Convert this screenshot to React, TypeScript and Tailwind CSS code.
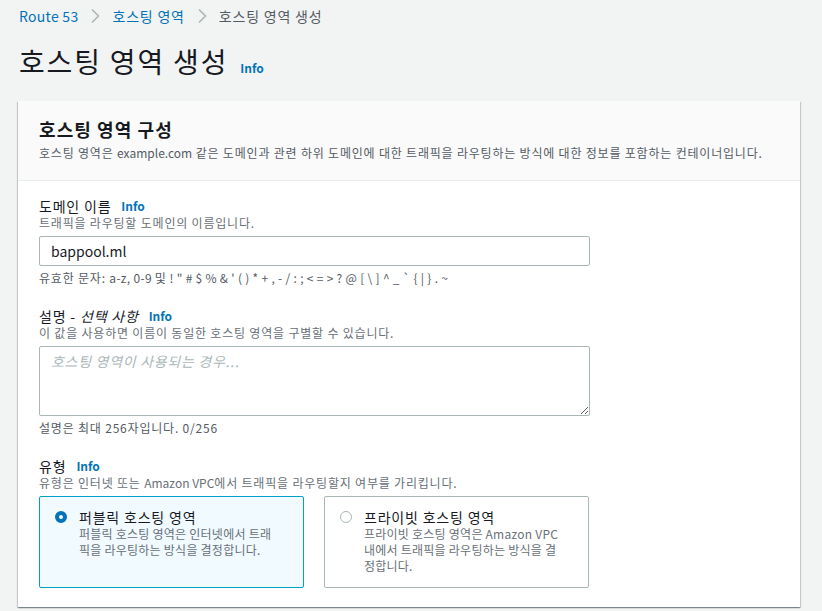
import React from 'react'

const font = { fontFamily: '"Noto Sans CJK KR", "Noto Sans", sans-serif' }

function Info() {
  return <span className="ml-[10px] text-[12px] font-bold tracking-normal text-[#0073bb]">Info</span>
}

function Latin({ children }: { children: React.ReactNode }) {
  return <span className="tracking-normal">{children}</span>
}

function Chevron() {
  return (
    <svg width="10" height="16" viewBox="0 0 10 16" className="mx-[12px]">
      <path d="M2 1.5l6.5 6.5-6.5 6.5" fill="none" stroke="#aab7b8" strokeWidth="1.6" />
    </svg>
  )
}

function Field({ label, desc, children }: { label: React.ReactNode; desc: React.ReactNode; children: React.ReactNode }) {
  return (
    <div>
      <div className="flex items-center text-[14px] leading-[18px] text-[#16191f]">{label}</div>
      <div className="text-[12px] leading-[16px] text-[#687078]">{desc}</div>
      {children}
    </div>
  )
}

function RadioCard({ selected, title, lines }: { selected?: boolean; title: string; lines: string[] }) {
  return (
    <div
      className={`flex h-[92px] w-[265px] rounded-[2px] border pl-[15px] pt-[11px] ${
        selected ? 'border-[#00a1c9] bg-[#f1faff]' : 'border-[#aab7b8] bg-white'
      }`}
    >
      <div className="pt-[3px]">
        {selected ? (
          <div className="h-[12px] w-[12px] rounded-full border-[4px] border-[#0073bb] bg-white" />
        ) : (
          <div className="h-[12px] w-[12px] rounded-full border border-[#aab7b8] bg-white" />
        )}
      </div>
      <div className="ml-[12px]">
        <div className="text-[14px] leading-[18px] text-[#16191f]">{title}</div>
        <div className="text-[12px] leading-[16px] tracking-[0.02em] text-[#687078]">
          {lines.map((l) => (
            <div key={l}>{l}</div>
          ))}
        </div>
      </div>
    </div>
  )
}

export default function App() {
  return (
    <div className="min-h-[611px] bg-[#f2f3f3] px-[19px] pt-[6px] tracking-[0.05em]" style={font}>
      <nav className="flex h-[20px] items-center text-[14px] text-[#545b64]">
        <span className="tracking-[0.02em] text-[#0073bb]">Route 53</span>
        <Chevron />
        <span className="text-[#0073bb]">호스팅 영역</span>
        <Chevron />
        <span>호스팅 영역 생성</span>
      </nav>

      <div className="mt-[17px] flex items-end">
        <h1 className="text-[28px] leading-[36px] tracking-[0.065em] text-[#16191f]">호스팅 영역 생성</h1>
        <span className="mb-[2px] ml-[12px] text-[12px] font-bold tracking-normal text-[#0073bb]">Info</span>
      </div>

      <div className="-ml-[1px] mt-[22px] w-[782px] bg-white shadow-[0_1px_1px_0_rgba(0,28,36,0.3),1px_1px_1px_0_rgba(0,28,36,0.15),-1px_1px_1px_0_rgba(0,28,36,0.15)]">
        <div className="border-b border-[#eaeded] bg-[#fafafa] px-[21px] pb-[19px] pt-[16px]">
          <h2 className="text-[18px] font-bold leading-[24px] tracking-[0.06em] text-[#16191f]">호스팅 영역 구성</h2>
          <p className="mt-[4px] text-[12px] leading-[16px] text-[#545b64]">
            호스팅 영역은 <Latin>example.com</Latin> 같은 도메인과 관련 하위 도메인에 대한 트래픽을 라우팅하는 방식에 대한 정보를 포함하는 컨테이너입니다.
          </p>
        </div>

        <div className="px-[21px] pb-[19px] pt-[16px]">
          <Field
            label={
              <>
                도메인 이름
                <Info />
              </>
            }
            desc="트래픽을 라우팅할 도메인의 이름입니다."
          >
            <div className="mt-[5px] flex h-[30px] w-[551px] items-center rounded-[2px] border border-[#aab7b8] bg-white px-[11px] text-[14px] tracking-normal text-[#16191f]">
              bappool.ml
            </div>
            <div className="mt-[4px] text-[12px] leading-[16px] text-[#545b64]">
              유효한 문자:{' '}
              <span className="tracking-[0.025em]">
                a-z, 0-9 <span className="tracking-[0.05em]">및</span> ! " # $ % &amp; ' ( ) * + , - / : ; &lt; = &gt; ? @ [ \ ] ^ _ ` {'{'} | {'}'} . ~
              </span>
            </div>
          </Field>

          <div className="mt-[21px]">
            <Field
              label={
                <>
                  설명 - <i className="ml-[4px]">선택 사항</i>
                  <Info />
                </>
              }
              desc="이 값을 사용하면 이름이 동일한 호스팅 영역을 구별할 수 있습니다."
            >
              <textarea
                readOnly
                placeholder="호스팅 영역이 사용되는 경우..."
                className="mt-[5px] block h-[70px] w-[551px] rounded-[2px] border border-[#aab7b8] bg-white px-[11px] py-[4px] text-[14px] italic tracking-[0.05em] outline-none placeholder:text-[#aab7b8]"
                style={font}
              />
              <div className="mt-[4px] text-[12px] leading-[16px] text-[#545b64]">설명은 최대 256자입니다. 0/256</div>
            </Field>
          </div>

          <div className="mt-[21px]">
            <Field
              label={
                <>
                  유형
                  <Info />
                </>
              }
              desc={
                <>
                  유형은 인터넷 또는 <Latin>Amazon VPC</Latin>에서 트래픽을 라우팅할지 여부를 가리킵니다.
                </>
              }
            >
              <div className="mt-[5px] flex gap-[20px]">
                <RadioCard
                  selected
                  title="퍼블릭 호스팅 영역"
                  lines={['퍼블릭 호스팅 영역은 인터넷에서 트래', '픽을 라우팅하는 방식을 결정합니다.']}
                />
                <RadioCard
                  title="프라이빗 호스팅 영역"
                  lines={['프라이빗 호스팅 영역은 Amazon VPC', '내에서 트래픽을 라우팅하는 방식을 결', '정합니다.']}
                />
              </div>
            </Field>
          </div>
        </div>
      </div>
    </div>
  )
}
